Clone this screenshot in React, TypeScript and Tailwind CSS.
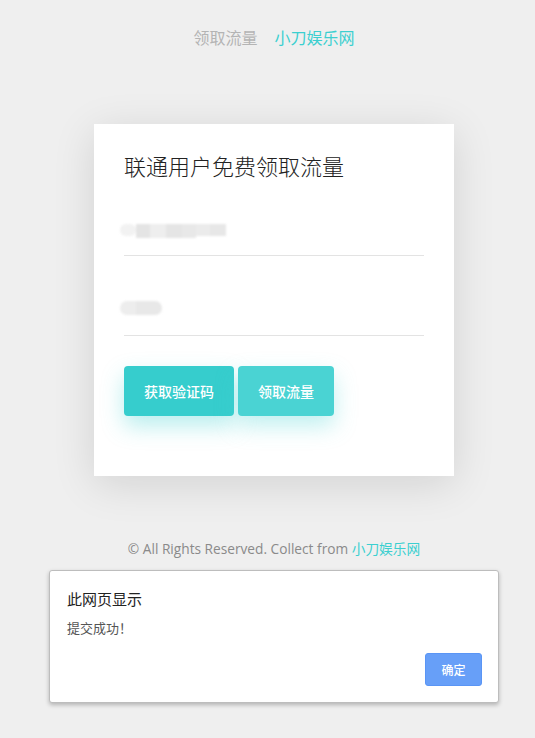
import React from 'react';

const cjk = '"Noto Sans CJK SC", "Open Sans", sans-serif';

/**
 * 联通免费领取流量页面 + 浏览器提示框
 */
export default function App() {
  return (
    <div
      className="relative w-[535px] h-[738px] bg-[#efefef] overflow-hidden"
      style={{ fontFamily: cjk }}
    >
      {/* 页面内容（居中于 548px 宽度） */}
      <div className="w-[548px]">
        {/* 顶部导航 */}
        <div className="flex justify-center gap-[17px] pt-[27px] text-[16px] leading-[20px]">
          <span className="text-[#b4b4b4]">领取流量</span>
          <span className="text-[#3ccfd0]">小刀娱乐网</span>
        </div>

        {/* 主卡片 */}
        <div className="mx-auto mt-[77px] w-[360px] h-[352px] bg-white px-[30px] pt-[27px] shadow-[0_8px_40px_rgba(0,0,0,0.12)]">
          <h1 className="text-[22px] leading-[28px] font-light text-[#222]">
            联通用户免费领取流量
          </h1>

          {/* 手机号输入 */}
          <div className="mt-[39px] h-[38px] border-b border-[#e3e3e3] relative">
            <div className="absolute left-[-4px] top-[6px] flex blur-[1px]">
              <div className="w-[16px] h-[12px] bg-[#f2f2f2] rounded-full" />
              <div className="w-[14px] h-[14px] bg-[#e4e4e4]" />
              <div className="w-[16px] h-[14px] bg-[#eeeeee]" />
              <div className="w-[16px] h-[14px] bg-[#e5e5e5]" />
              <div className="w-[14px] h-[14px] bg-[#e8e8e8]" />
              <div className="w-[14px] h-[12px] bg-[#ebebeb]" />
              <div className="w-[16px] h-[12px] bg-[#e7e7e7]" />
            </div>
          </div>

          {/* 验证码输入 */}
          <div className="mt-[42px] h-[38px] border-b border-[#e3e3e3] relative">
            <div className="absolute left-[-4px] top-[3px] flex blur-[1px]">
              <div className="w-[16px] h-[14px] bg-[#ededed] rounded-l-full" />
              <div className="w-[26px] h-[14px] bg-[#e8e8e8] rounded-r-full" />
            </div>
          </div>

          {/* 按钮 */}
          <div className="mt-[30px] flex gap-[4px]">
            <button className="w-[110px] h-[50px] rounded-[4px] bg-[#36cdcd] text-white text-[14px] font-medium shadow-[0_10px_22px_rgba(54,205,205,0.35)]">
              获取验证码
            </button>
            <button className="w-[96px] h-[50px] rounded-[4px] bg-[#4ad3d3] text-white text-[14px] font-medium shadow-[0_10px_22px_rgba(74,211,211,0.35)]">
              领取流量
            </button>
          </div>
        </div>

        {/* 页脚 */}
        <div
          className="mt-[63px] text-center text-[13.7px] leading-[20px] text-[#8a8a8a]"
          style={{ fontFamily: '"Open Sans", "Noto Sans CJK SC", sans-serif' }}
        >
          © All Rights Reserved. Collect from{' '}
          <span className="text-[#3ccfd0]">小刀娱乐网</span>
        </div>
      </div>

      {/* 浏览器提示框 */}
      <div className="absolute left-[49px] top-[570px] w-[450px] h-[133px] bg-white border border-[#bdbdbd] rounded-[3px] shadow-[0_2px_4px_rgba(0,0,0,0.25)]">
        <div className="pl-[17px] pt-[18px] text-[15px] leading-[20px] text-[#222]">
          此网页显示
        </div>
        <div className="pl-[17px] pt-[10px] text-[13px] leading-[18px] text-[#555]">
          提交成功！
        </div>
        <div className="absolute right-[16px] bottom-[16px]">
          <button className="w-[57px] h-[33px] rounded-[3px] bg-[#679ff8] border border-[#5a95f5] text-white text-[12px] font-medium">
            确定
          </button>
        </div>
      </div>
    </div>
  );
}
